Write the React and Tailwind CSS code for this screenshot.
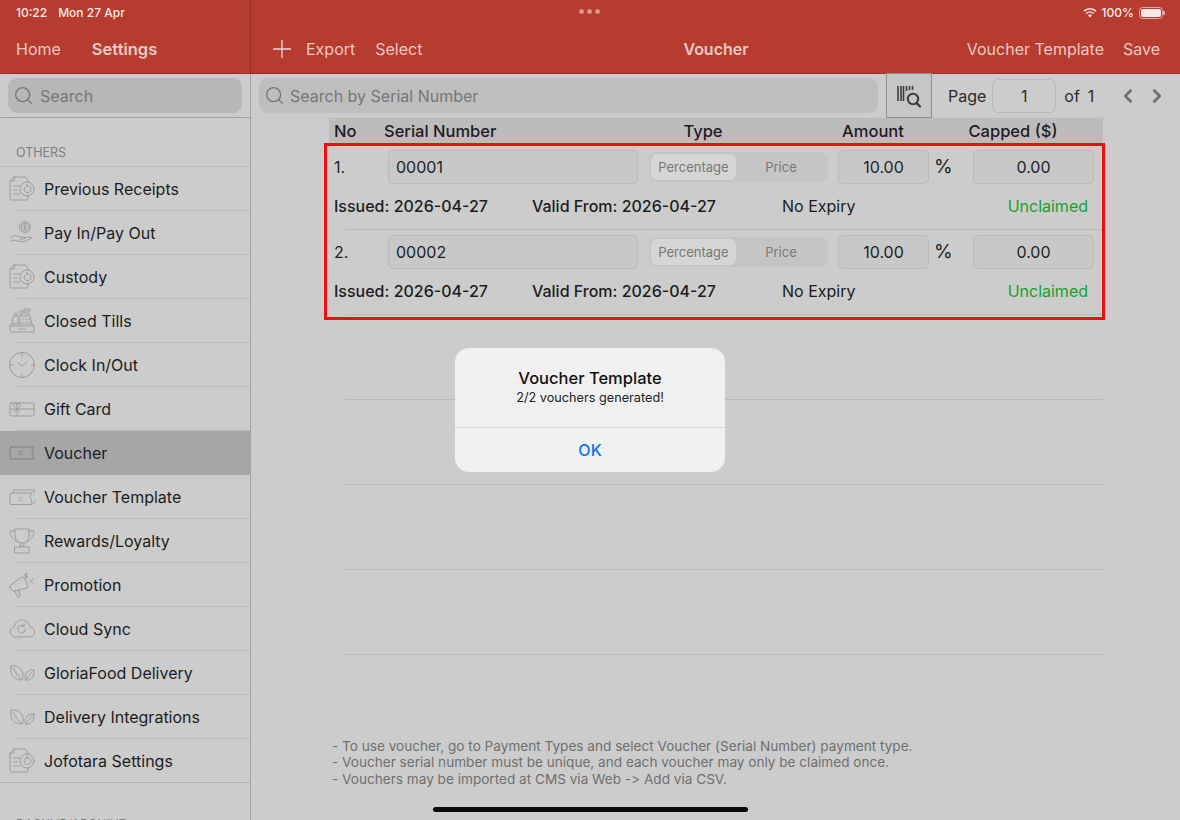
import { Search, ChevronLeft, ChevronRight } from "lucide-react";

const stroke = { fill: "none", stroke: "#9c9c9c", strokeWidth: 1, strokeLinecap: "round", strokeLinejoin: "round" };

function Svg({ children, w = 26, h = 26 }) {
  return (
    <svg width={w} height={h} viewBox="0 0 26 26" className="shrink-0" {...stroke}>
      {children}
    </svg>
  );
}

function ReceiptIcon() {
  return (
    <Svg>
      <path d="M5 1h11l3 3v2M19 20v3a1 1 0 0 1-1 1H2a1 1 0 0 1-1-1V5l4-4" />
      <path d="M5 1v4H1M4.500 10h6M4.500 14h4M4.500 18h6" />
      <circle cx="18" cy="13" r="7" />
      <path d="M15.500 11.500a3.500 3.500 0 1 0 2.500-1.800" />
      <path d="M18 8.300l-1 1.400 1.400 1" />
    </Svg>
  );
}

function PayIcon() {
  return (
    <Svg>
      <circle cx="16" cy="7" r="5.500" />
      <circle cx="16" cy="7" r="3.800" />
      <path d="M17 5.500h-1.600a.8.8 0 0 0 0 1.600h1.200a.8.8 0 0 1 0 1.600H15M16 4.500v5" />
      <path d="M1 18c2-2 5-3 7-2l4 1h3c1 0 1 2 0 2h-4M15 18l5-1c2-.4 3 .5 3 1l-6 3c-3 1-6 1-8 0l-3-.5M2 21c2-1 3-1 4-.7" />
    </Svg>
  );
}

function TillIcon() {
  return (
    <Svg>
      <path d="M1 18v5a1 1 0 0 0 1 1h22a1 1 0 0 0 1-1v-5l-2-2H3zM1 18h24M9 21h8" />
      <path d="M3 16l1-8h5v8M6 8V5h2v3M11 16V3h9v5h1l2 8M15 3V1h6v2" />
      <path d="M13 5h5v3h-5zM14 11h1M17 11h1M20 11h1M14 14h1M17 14h1M20 14h1" />
    </Svg>
  );
}

function ClockIcon() {
  return (
    <Svg>
      <circle cx="13" cy="13" r="12.500" />
      <path d="M13 1v3M13 22v3M1 13h3M22 13h3M9 11l4 3 5-4" />
    </Svg>
  );
}

function GiftIcon() {
  return (
    <Svg>
      <rect x="1" y="7" width="24" height="13" rx="1.500" />
      <path d="M1 13h24M8 7v13" />
      <path d="M8 13c-2-1-4-3-3-5s3-1 3 1c0-2 2-3 3-1s-1 4-3 5zM8 13l-3 3M8 13l3 3" />
    </Svg>
  );
}

function VoucherIcon() {
  return (
    <Svg>
      <g stroke="#7f7f7f">
        <path d="M2 7h23l-1 2c-1.500 1-1.500 3 0 4 l1 .5v.5c-1.500 1-1.500 3 0 4v1H2a1 1 0 0 1-1-1V8a1 1 0 0 1 1-1z" />
        <path d="M10 14.500l3-3M10 11.500h.4M12.800 14.500h.4" />
      </g>
    </Svg>
  );
}

function TemplateIcon() {
  return (
    <Svg>
      <path d="M1 10a1 1 0 0 1 1-1h21l-1 2c-1.500 1-1.500 3 0 4l1 1c-1 1-1 2 0 3v.5a1 1 0 0 1-1 1H2a1 1 0 0 1-1-1z" />
      <path d="M4 9V7a1 1 0 0 1 1-1h21l-1 2-1 1M24 19h1a1 1 0 0 0 1-1v-2" />
      <path d="M10 16.500l3-3M10 13.500h.4M12.800 16.500h.4" />
    </Svg>
  );
}

function TrophyIcon() {
  return (
    <Svg>
      <path d="M6 1h14v6c0 5-3 8-7 8s-7-3-7-8z" />
      <path d="M6 3H1c0 5 3 9 8 11M20 3h5c0 5-3 9-8 11M11 15v3h4v-3M6 19h14v6H6z" />
    </Svg>
  );
}

function PromoIcon() {
  return (
    <Svg>
      <path d="M1 15c0-1 .5-2 1.500-2.500L13 5c2-1 7 9 5 11l-12 3c-2 .5-5-2-5-4z" />
      <path d="M6 19l2 5c.5 1.500 3.500.8 3-1l-1.500-5M17 1v5M18.500 2h-2a1 1 0 0 0 0 2h1a1 1 0 0 1 0 2h-2M21 11l3-4M21 8h.4M24 11h.4" />
    </Svg>
  );
}

function CloudIcon() {
  return (
    <Svg>
      <path d="M6 21a5 5 0 0 1-1-9.800C6 7 9 4 13 4c4 0 7 3 8 7a5 5 0 0 1-1 10z" />
      <path d="M16.500 13a3.800 3.800 0 1 1-1.500-3M15 8l.2 2.200-2 .3" />
    </Svg>
  );
}

function LeafIcon() {
  return (
    <Svg>
      <path d="M2 6c6-1 11 2 12 8 .3 2 0 4-1 6-6 0-10-3-11-8-.3-2-.3-4 0-6zM4 8c2 4 5 8 9 12" />
      <path d="M25 10c-5-.5-8 2-9 6 0 1.500 0 3 .5 4 4 .5 7-1.500 8-5 .3-1.500.5-3.500.5-5zM23 12c-2 2-4 5-6.500 8" />
    </Svg>
  );
}

const menu = [
  { label: "Previous Receipts", icon: ReceiptIcon },
  { label: "Pay In/Pay Out", icon: PayIcon },
  { label: "Custody", icon: ReceiptIcon },
  { label: "Closed Tills", icon: TillIcon },
  { label: "Clock In/Out", icon: ClockIcon },
  { label: "Gift Card", icon: GiftIcon },
  { label: "Voucher", icon: VoucherIcon, active: true },
  { label: "Voucher Template", icon: TemplateIcon },
  { label: "Rewards/Loyalty", icon: TrophyIcon },
  { label: "Promotion", icon: PromoIcon },
  { label: "Cloud Sync", icon: CloudIcon },
  { label: "GloriaFood Delivery", icon: LeafIcon },
  { label: "Delivery Integrations", icon: LeafIcon },
  { label: "Jofotara Settings", icon: ReceiptIcon },
];

function Sidebar() {
  return (
    <aside className="w-[251px] shrink-0 h-full flex flex-col overflow-hidden">
      <div className="h-[74px] shrink-0 bg-[#b73c30] border-b border-r border-[#9c2a20] px-4 flex flex-col">
        <div className="h-[24px] pt-[1px] flex items-center gap-[11px] text-[12px] font-medium text-[#f5e9e7]">
          <span>10:22</span>
          <span>Mon 27 Apr</span>
        </div>
        <div className="flex items-center gap-[31px] h-[49px] text-[16px] leading-[24px] text-[#e9c9c5]">
          <span>Home</span>
          <span className="font-semibold text-[16.500px] leading-[24px] pt-[1px]">Settings</span>
        </div>
      </div>
      <div className="flex-1 min-h-0 border-r border-[#a3a3a3]">
        <div className="h-[44px] border-b border-[#a3a3a3] px-2 flex items-center">
          <div className="h-[35px] w-full rounded-[9px] bg-[#b7b7b7] flex items-center gap-[6px] pl-[5px] text-[16px] text-[#767676]">
            <Search size={21} strokeWidth={1.5} />
            <span>Search</span>
          </div>
        </div>
        <div className="h-[49px] border-b border-[#bababa] px-4 pb-[3px] flex items-end text-[12.500px] text-[#808080]">OTHERS</div>
        {menu.map((item, i) => {
          const Icon = item.icon;
          const last = i === menu.length - 1;
          return (
            <div key={item.label}>
              <div className={`h-[43px] flex items-center pl-[9px] gap-[9px] text-[16px] text-[#1c1c1c] ${item.active ? "bg-[#a6a6a9]" : ""}`}>
                <Icon />
                <span>{item.label}</span>
              </div>
              <div className={last ? "h-px bg-[#b5b5b5]" : item.active ? "h-px bg-[#a6a6a9]" : "ml-4 h-px bg-[#bababa]"} />
            </div>
          );
        })}
        <div className="mt-[33px] px-4 text-[12.500px] text-[#808080]">BACKUP/ARCHIVE</div>
      </div>
    </aside>
  );
}

function TopBar() {
  return (
    <div className="h-[74px] shrink-0 bg-[#b73c30] border-b border-[#9c2a20] flex flex-col text-[16px] text-[#e9c9c5]">
      <div className="h-[24px] pt-[1px] flex items-center justify-end pr-[15px] gap-[5px] text-[#f5e9e7]">
        <svg width="14" height="11" viewBox="0 0 14 11" fill="#f5e9e7">
          <path d="M7 10.500l-2-2.200a2.900 2.900 0 0 1 4 0zM3.800 7.100L2.700 5.900a6.300 6.300 0 0 1 8.600 0l-1.100 1.200a4.700 4.700 0 0 0-6.400 0zM1.600 4.700L.4 3.500a9.700 9.700 0 0 1 13.200 0l-1.200 1.200a8 8 0 0 0-10.800 0z" />
        </svg>
        <span className="text-[12px] font-medium">100%</span>
        <div className="flex items-center">
          <div className="w-[24px] h-[12px] rounded-[3.500px] border border-[#dfa9a3] p-px">
            <div className="w-full h-full rounded-[2px] bg-[#f5e9e7]" />
          </div>
          <div className="w-[2px] h-[4px] bg-[#dfa9a3]" />
        </div>
      </div>
      <div className="h-[49px] flex items-center pl-[22px] pr-5">
        <div className="flex-1 basis-0 flex items-center">
          <svg width="18" height="18" viewBox="0 0 18 18" stroke="#f0d9d6" strokeWidth="1.300">
            <path d="M9 0v18M0 9h18" />
          </svg>
          <span className="ml-[15px]">Export</span>
          <span className="ml-[20px]">Select</span>
        </div>
        <span className="font-semibold -ml-[1px]">Voucher</span>
        <div className="flex-1 basis-0 flex items-center justify-end">
          <span>Voucher Template</span>
          <span className="ml-[19px]">Save</span>
        </div>
      </div>
    </div>
  );
}

function BarcodeIcon() {
  return (
    <svg width="26" height="26" viewBox="0 0 26 26" fill="none" stroke="#3c3c3c">
      <path d="M2 3v15M5 3v15M7.500 3v15" strokeWidth="1.600" />
      <path d="M10.500 3v5M13.500 3v4M16.500 3v4" strokeWidth="1.600" />
      <circle cx="17" cy="16" r="5.200" strokeWidth="2" />
      <path d="M20.500 20l3.500 3.500" strokeWidth="2.400" strokeLinecap="round" />
    </svg>
  );
}

function SearchRow() {
  return (
    <div className="h-[44px] shrink-0 flex items-center pl-2 border-b border-[#c8c8c8] text-[16px] text-[#2a2a2a]">
      <div className="w-[619px] h-[35px] rounded-[9px] bg-[#bebebe] flex items-center gap-[5px] pl-[5px] text-[#767676]">
        <Search size={21} strokeWidth={1.5} />
        <span>Search by Serial Number</span>
      </div>
      <div className="ml-2 w-[46px] h-[45px] border border-[#8f8f8f] bg-[#c6c6c6] flex items-center justify-center">
        <BarcodeIcon />
      </div>
      <span className="ml-4">Page</span>
      <div className="ml-[6px] w-[64px] h-[34px] rounded-[6px] border border-[#bcbcbc] flex items-center justify-center">1</div>
      <span className="ml-2">of</span>
      <span className="ml-2">1</span>
      <ChevronLeft size={22} strokeWidth={2.800} className="ml-[23px] text-[#6e6e6e]" />
      <ChevronRight size={22} strokeWidth={2.800} className="ml-[7px] text-[#6e6e6e]" />
    </div>
  );
}

function Field({ className, children }) {
  return (
    <div className={`h-[34px] rounded-[5px] border border-[#bababa] bg-[#c8c8c8] flex items-center text-[16px] text-[#1f1f1f] ${className}`}>
      {children}
    </div>
  );
}

function VoucherRow({ no, serial }) {
  return (
    <div className="h-[85px] ml-[16px] border-b border-[#b9b9b9]">
      <div className="-ml-[11px] pt-[5px] flex items-center">
        <span className="w-[54px] text-[16px] text-[#1f1f1f]">{no}.</span>
        <Field className="w-[250px] pl-[7px]">{serial}</Field>
        <div className="ml-[11px] w-[179px] h-[30px] rounded-[8px] bg-[#c5c5c5] p-[2px] flex text-[13px] text-[#777777]">
          <div className="w-[85px] pt-[1px] rounded-[6px] bg-[#d5d5d5] flex items-center justify-center">Percentage</div>
          <div className="flex-1 pt-[1px] flex items-center justify-center">Price</div>
        </div>
        <Field className="ml-[10px] w-[91px] justify-center">10.00</Field>
        <span className="w-[44px] pl-[5px] text-[19px] text-[#1f1f1f]">%</span>
        <Field className="w-[121px] justify-center">0.00</Field>
      </div>
      <div className="-ml-[11px] mt-[11px] flex items-center text-[16px] font-medium text-[#1c1c1c] h-[22px] pr-[15px]">
        <span className="w-[198px]">Issued: 2026-04-27</span>
        <span className="w-[250px]">Valid From: 2026-04-27</span>
        <span className="font-normal">No Expiry</span>
        <span className="ml-auto font-normal text-[#12a130]">Unclaimed</span>
      </div>
    </div>
  );
}

function Table() {
  return (
    <div className="ml-[78px] w-[774px]">
      <div className="h-[25px] pt-[2px] bg-[#bcbcbc] flex items-center pl-[5px] text-[16.500px] font-medium text-[#1c1c1c]">
        <span className="w-[50px]">No</span>
        <span className="w-[259px]">Serial Number</span>
        <span className="w-[120px] text-center">Type</span>
        <span className="w-[120px] ml-[50px] text-center">Amount</span>
        <span className="w-[120px] ml-[20px] text-center">Capped ($)</span>
      </div>
      <div className="pt-[2px]">
        <VoucherRow no={1} serial="00001" />
        <VoucherRow no={2} serial="00002" />
        <div className="h-[85px] ml-[16px] border-b border-[#b9b9b9]" />
        <div className="h-[85px] ml-[16px] border-b border-[#b9b9b9]" />
        <div className="h-[85px] ml-[16px] border-b border-[#b9b9b9]" />
        <div className="h-[85px] ml-[16px] border-b border-[#b9b9b9]" />
      </div>
    </div>
  );
}

export default function App() {
  return (
    <div className="relative w-[1180px] h-[820px] overflow-hidden flex bg-[#cccccc] [font-family:Inter,'Liberation_Sans',sans-serif]">
      <Sidebar />
      <main className="flex-1 min-w-0 flex flex-col">
        <TopBar />
        <SearchRow />
        <Table />
        <div className="mt-auto mb-[33px] ml-[81px] text-[13.600px] leading-[16.500px] text-[#6f6f6f] [font-variant-ligatures:none]">
          <p>- To use voucher, go to Payment Types and select Voucher (Serial Number) payment type.</p>
          <p>- Voucher serial number must be unique, and each voucher may only be claimed once.</p>
          <p>- Vouchers may be imported at CMS via Web -&gt; Add via CSV.</p>
        </div>
      </main>

      {/* multitasking dots */}
      <div className="absolute top-[9px] left-[579px] flex gap-[3px]">
        <div className="w-[5px] h-[5px] rounded-full bg-[#dc8f87]" />
        <div className="w-[5px] h-[5px] rounded-full bg-[#dc8f87]" />
        <div className="w-[5px] h-[5px] rounded-full bg-[#dc8f87]" />
      </div>

      {/* highlight box */}
      <div className="absolute left-[324px] top-[143px] w-[781px] h-[177px] border-[3px] border-[#f40b0b] pointer-events-none" />

      {/* alert */}
      <div className="absolute left-[455px] top-[348px] w-[270px] h-[124px] rounded-[14px] bg-[#f0f0f0] flex flex-col">
        <div className="h-[80px] border-b border-[#d3d3d3] flex flex-col items-center pt-[19px]">
          <span className="text-[16.500px] leading-[22px] font-medium text-[#111111]">Voucher Template</span>
          <span className="text-[12.700px] leading-[18px] text-[#222222]">2/2 vouchers generated!</span>
        </div>
        <div className="flex-1 flex items-center justify-center text-[16px] font-medium text-[#0f72f0]">OK</div>
      </div>

      {/* home indicator */}
      <div className="absolute left-[433px] top-[807px] w-[315px] h-[5px] rounded-full bg-[#0a0a0a]" />
    </div>
  );
}
